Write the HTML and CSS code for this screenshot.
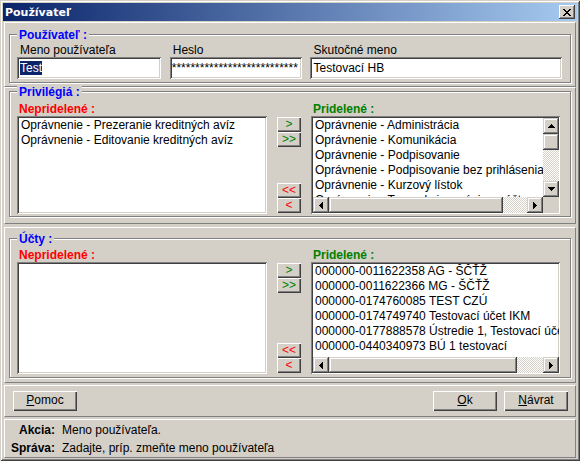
FILE: index.html
```html
<!DOCTYPE html>
<html lang="sk">
<head>
<meta charset="utf-8">
<title>Používateľ</title>
<link rel="stylesheet" href="styles.css">
</head>
<body>
<div class="window">
  <div class="titlebar">
    <span class="title">Používateľ</span>
    <span class="close"><svg width="8" height="7" viewBox="0 0 8 7"><path d="M0 0h2v1H0zM6 0h2v1H6zM1 1h2v1H1zM5 1h2v1H5zM2 2h4v1H2zM3 3h2v1H3zM2 4h4v1H2zM1 5h2v1H1zM5 5h2v1H5zM0 6h2v1H0zM6 6h2v1H6z" fill="#000"/></svg></span>
  </div>

  <div class="panel p1">
    <div class="group g1">
      <div class="legend">Používateľ :</div>
      <div class="fields">
        <div class="field f1">
          <div class="flabel">Meno používateľa</div>
          <div class="input"><span class="sel">Test</span></div>
        </div>
        <div class="field f2">
          <div class="flabel">Heslo</div>
          <div class="input pwd">***************************</div>
        </div>
        <div class="field f3">
          <div class="flabel">Skutočné meno</div>
          <div class="input">Testovací HB</div>
        </div>
      </div>
    </div>
  </div>

  <div class="panel p2">
    <div class="group g2">
      <div class="legend">Privilégiá :</div>
      <div class="dual">
        <div class="clabel red">Nepridelené :</div>
        <div></div>
        <div class="clabel green">Pridelené :</div>
        <div class="list">
          <div class="item">Oprávnenie - Prezeranie kreditných avíz</div>
          <div class="item">Oprávnenie - Editovanie kreditných avíz</div>
        </div>
        <div class="arrows">
          <div class="agroup"><div class="abtn green">&gt;</div><div class="abtn green">&gt;&gt;</div></div>
          <div class="agroup"><div class="abtn red">&lt;&lt;</div><div class="abtn red">&lt;</div></div>
        </div>
        <div class="list sc sc-both">
          <div class="items">
            <div class="item">Oprávnenie - Administrácia</div>
            <div class="item">Oprávnenie - Komunikácia</div>
            <div class="item">Oprávnenie - Podpisovanie</div>
            <div class="item">Oprávnenie - Podpisovanie bez prihlásenia</div>
            <div class="item">Oprávnenie - Kurzový lístok</div>
            <div class="item">Oprávnenie - Transakcie a výpisy z účtov</div>
          </div>
          <div class="vbar">
            <div class="sbtn"><svg width="7" height="4" viewBox="0 0 7 4"><path d="M3 0h1v1H3zM2 1h3v1H2zM1 2h5v1H1zM0 3h7v1H0z"/></svg></div>
            <div class="thumb vthumb"></div>
            <div class="track"></div>
            <div class="sbtn"><svg width="7" height="4" viewBox="0 0 7 4"><path d="M0 0h7v1H0zM1 1h5v1H1zM2 2h3v1H2zM3 3h1v1H3z"/></svg></div>
          </div>
          <div class="hbar">
            <div class="sbtn"><svg width="4" height="7" viewBox="0 0 4 7"><path d="M0 3h1v1H0zM1 2h1v3H1zM2 1h1v5H2zM3 0h1v7H3z"/></svg></div>
            <div class="thumb hthumb1"></div>
            <div class="track"></div>
            <div class="sbtn"><svg width="4" height="7" viewBox="0 0 4 7"><path d="M0 0h1v7H0zM1 1h1v5H1zM2 2h1v3H2zM3 3h1v1H3z"/></svg></div>
          </div>
          <div class="corner"></div>
        </div>
      </div>
    </div>
  </div>

  <div class="panel p3">
    <div class="group g3">
      <div class="legend">Účty :</div>
      <div class="dual">
        <div class="clabel red">Nepridelené :</div>
        <div></div>
        <div class="clabel green">Pridelené :</div>
        <div class="list"></div>
        <div class="arrows">
          <div class="agroup"><div class="abtn green">&gt;</div><div class="abtn green">&gt;&gt;</div></div>
          <div class="agroup"><div class="abtn red">&lt;&lt;</div><div class="abtn red">&lt;</div></div>
        </div>
        <div class="list sc sc-h">
          <div class="items">
            <div class="item">000000-0011622358 AG - ŠČŤŽ</div>
            <div class="item">000000-0011622366 MG - ŠČŤŽ</div>
            <div class="item">000000-0174760085 TEST CZÚ</div>
            <div class="item">000000-0174749740 Testovací účet IKM</div>
            <div class="item">000000-0177888578 Ústredie 1, Testovací účet</div>
            <div class="item">000000-0440340973 BÚ 1 testovací</div>
          </div>
          <div class="hbar">
            <div class="sbtn"><svg width="4" height="7" viewBox="0 0 4 7"><path d="M0 3h1v1H0zM1 2h1v3H1zM2 1h1v5H2zM3 0h1v7H3z"/></svg></div>
            <div class="thumb hthumb2"></div>
            <div class="track"></div>
            <div class="sbtn"><svg width="4" height="7" viewBox="0 0 4 7"><path d="M0 0h1v7H0zM1 1h1v5H1zM2 2h1v3H2zM3 3h1v1H3z"/></svg></div>
          </div>
        </div>
      </div>
    </div>
  </div>

  <div class="panel p4">
    <div class="btn"><u>P</u>omoc</div>
    <div class="spacer"></div>
    <div class="btn"><u>O</u>k</div>
    <div class="btn"><u>N</u>ávrat</div>
  </div>

  <div class="panel p5">
    <div class="slabel">Akcia:</div>
    <div class="sval">Meno používateľa.</div>
    <div class="slabel">Správa:</div>
    <div class="sval">Zadajte, príp. zmeňte meno používateľa</div>
  </div>
</div>
</body>
</html>
```

FILE: styles.css
```css
* { box-sizing: border-box; }

body {
  margin: 0;
  background: #D4D0C8;
  font-family: "Liberation Sans", Arial, sans-serif;
  font-size: 12px;
  color: #000;
}

.window {
  width: 580px;
  height: 461px;
  padding: 3px;
  display: flex;
  flex-direction: column;
  background: #D4D0C8;
  box-shadow: inset 1px 1px #D4D0C8, inset -1px -1px #404040,
              inset 2px 2px #fff, inset -2px -2px #808080;
}

.titlebar {
  flex: none;
  height: 18px;
  margin-bottom: 1px;
  padding: 0 2px 0 2px;
  display: flex;
  align-items: center;
  justify-content: space-between;
  background: linear-gradient(to right, #0A246A, #A6CAF0);
  color: #fff;
  font: bold 11px "DejaVu Sans", sans-serif;
}

.close {
  width: 16px;
  height: 14px;
  display: flex;
  align-items: center;
  justify-content: center;
  background: #D4D0C8;
  box-shadow: inset -1px -1px #404040, inset 1px 1px #fff,
              inset -2px -2px #808080;
}

.panel {
  flex: none;
  margin: 0 1px;
  border: 1px solid;
  border-color: #fff #808080 #808080 #fff;
}

.p1 { height: 65px; padding-top: 11px; }
.p2 { height: 137px; padding-top: 3px; }
.p3 { height: 156px; padding-top: 10px; margin-top: 3px; }
.p4 {
  height: 32px;
  margin-top: 2px;
  display: flex;
  align-items: center;
  gap: 7px;
  padding: 0 7px 0 8px;
}
.p5 {
  height: 39px;
  margin-top: 2px;
  display: grid;
  grid-template-columns: 44px 1fr;
  column-gap: 7px;
  grid-auto-rows: 18px;
  line-height: 18px;
  padding: 1px 0 0 6px;
}

.group {
  margin: 0 4px;
  border: 1px solid #808080;
  box-shadow: inset 1px 1px #fff, 1px 1px #fff;
  padding: 0 8px 3px 7px;
}
.g2 { padding-bottom: 2px; }

.legend {
  width: max-content;
  margin-top: -6px;
  padding: 0 2px;
  line-height: 12px;
  background: #D4D0C8;
  color: #0000FF;
  font-weight: bold;
}

.fields {
  display: flex;
  margin-top: 3px;
}
.f1 { width: 144px; }
.f2 { width: 133px; margin-left: 9px; }
.f3 { width: 252px; margin-left: 8px; }

.flabel {
  height: 13px;
  line-height: 13px;
  padding-left: 3px;
}

.input {
  height: 22px;
  background: #fff;
  padding: 2px 3px;
  line-height: 18px;
  white-space: nowrap;
  overflow: hidden;
  box-shadow: inset 1px 1px #808080, inset -1px -1px #fff,
              inset 2px 2px #404040, inset -2px -2px #D4D0C8;
}
.pwd { padding-left: 2px; }
.sel {
  background: #0A246A;
  color: #fff;
  display: inline-block;
  line-height: 14px;
}

.dual {
  display: grid;
  grid-template-columns: 250px 24px 249px;
  grid-template-rows: 14px auto;
  column-gap: 10px;
  margin-top: 4px;
}
.g3 .dual { margin-top: 3px; }

.clabel {
  line-height: 14px;
  font-weight: bold;
  padding-left: 2px;
}
.red { color: #FF0000; }
.green { color: #008000; }

.list {
  background: #fff;
  padding: 2px 2px 2px 4px;
  overflow: hidden;
  box-shadow: inset 1px 1px #808080, inset -1px -1px #fff,
              inset 2px 2px #404040, inset -2px -2px #D4D0C8;
}
.g2 .list { height: 98px; }
.g3 .list { height: 112px; }

.item {
  line-height: 15px;
  white-space: nowrap;
}

.list.sc {
  display: grid;
  padding: 2px 1px 1px 2px;
}
.sc-both {
  grid-template-columns: 1fr 16px;
  grid-template-rows: 1fr 16px;
}
.sc-h {
  grid-template-columns: 1fr;
  grid-template-rows: 1fr 16px;
}
.items {
  overflow: hidden;
  padding-left: 2px;
  min-width: 0;
}

.vbar {
  display: flex;
  flex-direction: column;
}
.hbar {
  display: flex;
}
.sbtn {
  flex: none;
  width: 16px;
  height: 16px;
  display: flex;
  align-items: center;
  justify-content: center;
  background: #D4D0C8;
  box-shadow: inset -1px -1px #404040, inset 1px 1px #D4D0C8,
              inset -2px -2px #808080, inset 2px 2px #fff;
}
.thumb {
  flex: none;
  background: #D4D0C8;
  box-shadow: inset -1px -1px #404040, inset 1px 1px #D4D0C8,
              inset -2px -2px #808080, inset 2px 2px #fff;
}
.vthumb { height: 16px; }
.hthumb1 { width: 174px; height: 16px; }
.hthumb2 { width: 188px; height: 16px; }
.track {
  flex: 1;
  background: repeating-conic-gradient(#fff 0 25%, #D4D0C8 0 50%) 0 0 / 2px 2px;
}
.corner { background: #D4D0C8; }

.arrows {
  display: flex;
  flex-direction: column;
  justify-content: space-between;
  padding: 1px 0;
}
.abtn {
  width: 24px;
  height: 15px;
  line-height: 14px;
  text-align: center;
  font-size: 12px;
  background: #D4D0C8;
  box-shadow: inset 1px 1px #fff, inset -1px -1px #404040,
              inset -2px -2px #808080;
}

.btn {
  width: 64px;
  height: 20px;
  line-height: 19px;
  text-align: center;
  background: #D4D0C8;
  box-shadow: inset 1px 1px #fff, inset -1px -1px #404040,
              inset -2px -2px #808080;
}
.spacer { flex: 1; }

.slabel {
  font-weight: bold;
  text-align: right;
}
```
